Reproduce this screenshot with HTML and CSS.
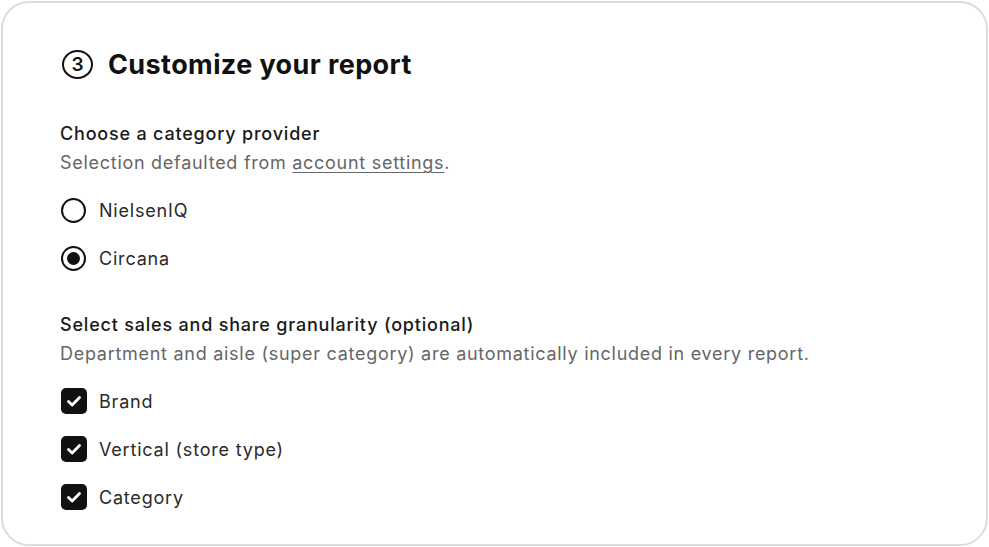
FILE: index.html
```html
<!DOCTYPE html>
<html lang="en">
<head>
<meta charset="utf-8">
<title>Customize your report</title>
<link rel="stylesheet" href="styles.css">
</head>
<body>
<section class="card">
  <h2 class="title">
    <span class="step">3</span>
    <span>Customize your report</span>
  </h2>

  <div class="group group-provider">
    <div class="label">Choose a category provider</div>
    <div class="desc">Selection defaulted from <a href="#" class="link">account settings</a>.</div>
    <div class="options">
      <label class="option">
        <span class="radio"></span>
        <span class="opt-text">NielsenIQ</span>
      </label>
      <label class="option">
        <span class="radio checked"></span>
        <span class="opt-text">Circana</span>
      </label>
    </div>
  </div>

  <div class="group group-granularity">
    <div class="label">Select sales and share granularity (optional)</div>
    <div class="desc">Department and aisle (super category) are automatically included in every report.</div>
    <div class="options">
      <label class="option">
        <span class="checkbox"><svg viewBox="0 0 26 26" width="26" height="26"><polyline points="7.5,13.5 11.2,17 18.5,9.5" fill="none" stroke="#fff" stroke-width="2.8" stroke-linecap="round" stroke-linejoin="round"/></svg></span>
        <span class="opt-text">Brand</span>
      </label>
      <label class="option">
        <span class="checkbox"><svg viewBox="0 0 26 26" width="26" height="26"><polyline points="7.5,13.5 11.2,17 18.5,9.5" fill="none" stroke="#fff" stroke-width="2.8" stroke-linecap="round" stroke-linejoin="round"/></svg></span>
        <span class="opt-text">Vertical (store type)</span>
      </label>
      <label class="option">
        <span class="checkbox"><svg viewBox="0 0 26 26" width="26" height="26"><polyline points="7.5,13.5 11.2,17 18.5,9.5" fill="none" stroke="#fff" stroke-width="2.8" stroke-linecap="round" stroke-linejoin="round"/></svg></span>
        <span class="opt-text">Category</span>
      </label>
    </div>
  </div>
</section>
</body>
</html>
```

FILE: styles.css
```css
* { box-sizing: border-box; }
html, body { margin: 0; padding: 0; background: #fff; }
body {
  font-family: Inter, "Noto Sans", "Liberation Sans", sans-serif;
  color: #191919;
}
.card {
  margin: 1px;
  border: 2px solid #dcdcdc;
  border-radius: 28px;
  padding: 43px 40px 23px 57px;
  height: 545px;
}
.title {
  display: flex;
  align-items: center;
  gap: 15px;
  margin: 0;
  height: 36px;
  font-size: 27px;
  font-weight: 700;
  letter-spacing: 0.4px;
  color: #111;
  padding-left: 2px;
}
.step {
  width: 31px;
  height: 29px;
  border: 2.5px solid #111;
  border-radius: 50%;
  display: flex;
  align-items: center;
  justify-content: center;
  font-size: 19px;
  font-weight: 600;
  letter-spacing: 0;
  padding-top: 1px;
}
.group-provider { margin-top: 37px; }
.group-granularity { margin-top: 28px; }
.label {
  font-size: 18px;
  line-height: 29px;
  font-weight: 500;
  letter-spacing: 0.8px;
  color: #1a1a1a;
}
.desc {
  font-size: 18px;
  line-height: 29px;
  letter-spacing: 0.72px;
  color: #666;
}
.link { color: #666; text-decoration: underline; text-underline-offset: 3px; text-decoration-thickness: 1px; }
.options { margin-top: 9px; display: flex; flex-direction: column; }
.option {
  display: flex;
  align-items: center;
  height: 48px;
  gap: 12px;
}
.opt-text { font-size: 18px; letter-spacing: 0.8px; color: #2a2a2a; }
.radio {
  width: 25px;
  height: 25px;
  border: 2.5px solid #111;
  border-radius: 50%;
  display: flex;
  align-items: center;
  justify-content: center;
  margin-left: 1px;
  margin-right: 1px;
}
.radio.checked::after {
  content: "";
  width: 13px;
  height: 13px;
  border-radius: 50%;
  background: #111;
}
.checkbox {
  width: 26px;
  height: 26px;
  border-radius: 5px;
  background: #111;
  display: flex;
  margin-left: 1px;
}
```
